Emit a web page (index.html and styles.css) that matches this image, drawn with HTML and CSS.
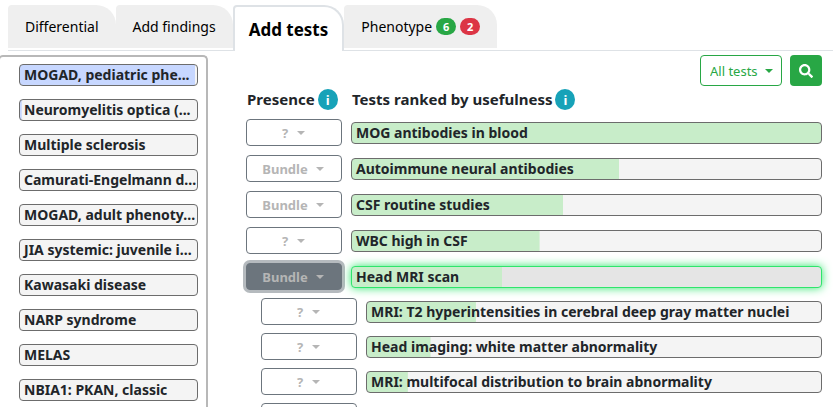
FILE: index.html
```
<!DOCTYPE html>
<html lang="en">
<head>
    <meta charset="UTF-8">
    <meta name="viewport" content="width=device-width, initial-scale=1.0">
    <title>Add tests</title>
    <link rel="stylesheet" href="styles.css">
</head>
<body>
    <nav class="tabs">
        <a class="tab" href="#differential">Differential</a>
        <a class="tab" href="#findings">Add findings</a>
        <a class="tab active" href="#tests">Add tests</a>
        <a class="tab" href="#phenotype">Phenotype <span class="badge present">6</span><span class="badge absent">2</span></a>
    </nav>

    <div class="content">
        <aside class="differential">
            <button class="bar disease" style="--fill: 99%">MOGAD, pediatric phe...</button>
            <button class="bar disease" style="--fill: 1%">Neuromyelitis optica (...</button>
            <button class="bar disease">Multiple sclerosis</button>
            <button class="bar disease">Camurati-Engelmann d...</button>
            <button class="bar disease">MOGAD, adult phenoty...</button>
            <button class="bar disease">JIA systemic: juvenile i...</button>
            <button class="bar disease">Kawasaki disease</button>
            <button class="bar disease">NARP syndrome</button>
            <button class="bar disease">MELAS</button>
            <button class="bar disease">NBIA1: PKAN, classic</button>
        </aside>

        <main class="tests">
            <div class="toolbar">
                <select class="filter" aria-label="Filter tests">
                    <option>All tests</option>
                </select>
                <button class="search" aria-label="Search">
                    <svg viewBox="0 0 512 512" width="14" height="14"><path fill="currentColor" d="M505 442.7L405.3 343c-4.5-4.5-10.6-7-17-7H372c27.6-35.3 44-79.7 44-128C416 93.1 322.9 0 208 0S0 93.1 0 208s93.1 208 208 208c48.3 0 92.7-16.4 128-44v16.3c0 6.4 2.5 12.5 7 17l99.7 99.7c9.4 9.4 24.6 9.4 33.9 0l28.3-28.3c9.4-9.4 9.4-24.6.1-34zM208 336c-70.7 0-128-57.2-128-128 0-70.7 57.2-128 128-128 70.7 0 128 57.2 128 128 0 70.7-57.2 128-128 128z"/></svg>
                </button>
            </div>

            <div class="row headings">
                <div class="heading">Presence <button class="info" aria-label="About presence">i</button></div>
                <div class="heading">Tests ranked by usefulness <button class="info" aria-label="About ranking">i</button></div>
            </div>

            <div class="list">
                <div class="row">
                    <select class="presence" aria-label="MOG antibodies in blood"><option>?</option></select>
                    <button class="bar" style="--fill: 100%">MOG antibodies in blood</button>
                </div>
                <div class="row">
                    <select class="presence bundle" aria-label="Autoimmune neural antibodies"><option>Bundle</option></select>
                    <button class="bar" style="--fill: 57%">Autoimmune neural antibodies</button>
                </div>
                <div class="row">
                    <select class="presence bundle" aria-label="CSF routine studies"><option>Bundle</option></select>
                    <button class="bar" style="--fill: 45%">CSF routine studies</button>
                </div>
                <div class="row">
                    <select class="presence" aria-label="WBC high in CSF"><option>?</option></select>
                    <button class="bar" style="--fill: 40%">WBC high in CSF</button>
                </div>
                <div class="row">
                    <select class="presence bundle open" aria-label="Head MRI scan"><option>Bundle</option></select>
                    <button class="bar current" style="--fill: 32%">Head MRI scan</button>
                </div>
            </div>

            <div class="list nested">
                <div class="row">
                    <select class="presence" aria-label="MRI: T2 hyperintensities"><option>?</option></select>
                    <button class="bar" style="--fill: 24%">MRI: T2 hyperintensities in cerebral deep gray matter nuclei</button>
                </div>
                <div class="row">
                    <select class="presence" aria-label="Head imaging: white matter abnormality"><option>?</option></select>
                    <button class="bar" style="--fill: 14%">Head imaging: white matter abnormality</button>
                </div>
                <div class="row">
                    <select class="presence" aria-label="MRI: multifocal distribution"><option>?</option></select>
                    <button class="bar" style="--fill: 9%">MRI: multifocal distribution to brain abnormality</button>
                </div>
                <div class="row">
                    <select class="presence" aria-label="Next test"><option>?</option></select>
                </div>
            </div>
        </main>
    </div>
</body>
</html>
```
FILE: styles.css
```
* {
    box-sizing: border-box;
}

body {
    margin: 0;
    height: 100vh;
    overflow: hidden;
    display: flex;
    flex-direction: column;
    font-family: "Noto Sans", "Open Sans", sans-serif;
    font-size: 14px;
    color: #212529;
    background: #fff;
}

button,
select {
    font: inherit;
    margin: 0;
    cursor: pointer;
}

.tabs {
    display: flex;
    flex: none;
    height: 46px;
    margin: 5px 0 0 8px;
    border-bottom: 1px solid #dee2e6;
}

.tab {
    display: flex;
    align-items: center;
    height: 43px;
    padding: 0 17px;
    border-radius: 4px 20px 0 0;
    background: #efefef;
    color: #000;
    text-decoration: none;
    white-space: nowrap;
}

.tab.active {
    height: 46px;
    padding: 0 14px;
    border: 2px solid #dee2e6;
    border-bottom: 0;
    background: #fff;
    font-size: 17px;
    font-weight: 700;
}

.badge {
    width: 20px;
    margin-left: 4px;
    border-radius: 10px;
    color: #fff;
    font-size: 11px;
    font-weight: 700;
    line-height: 17px;
    text-align: center;
}

.present {
    background: #28a745;
}

.absent {
    background: #dc3545;
}

.content {
    display: flex;
    flex: 1;
    min-height: 0;
    padding: 4px 11px 0 0;
    overflow: hidden;
}

.differential {
    display: flex;
    flex: none;
    flex-direction: column;
    gap: 13px;
    width: 210px;
    margin-left: -2px;
    padding: 7px 8px 0 19px;
    border: 2px solid #b8b8b8;
    border-bottom: 0;
    border-radius: 5px 5px 0 0;
}

.bar {
    --fill: 0%;
    --color: #c8edc9;
    --track: #f4f4f4;
    flex: none;
    height: 22px;
    padding: 0 4px;
    border: 1px solid #6c6c6c;
    border-radius: 4px;
    background: linear-gradient(var(--color), var(--color)) 0 0 / var(--fill) 100% no-repeat var(--track);
    color: #212529;
    font-weight: 700;
    line-height: 20px;
    text-align: left;
    white-space: nowrap;
    overflow: hidden;
}

.disease {
    --color: #c7d7ff;
}

.current {
    --track: #e5e5e5;
    border-color: #2fe56c;
    box-shadow: 0 0 10px #2fe56c;
}

.tests {
    flex: 1;
    min-width: 0;
    padding-left: 38px;
}

.toolbar {
    display: flex;
    justify-content: flex-end;
    gap: 8px;
}

.filter,
.presence {
    appearance: none;
    border: 1px solid #6c757d;
    border-radius: 4px;
    background: #fff url("data:image/svg+xml,%3Csvg xmlns='http://www.w3.org/2000/svg' width='8' height='4'%3E%3Cpath d='M0 0h8L4 4z' fill='%23b5b5b5'/%3E%3C/svg%3E") no-repeat 50px 11px;
    font-size: 13px;
}

.filter {
    width: 82px;
    height: 31px;
    padding: 0 9px;
    border-color: #28a745;
    background-image: url("data:image/svg+xml,%3Csvg xmlns='http://www.w3.org/2000/svg' width='8' height='4'%3E%3Cpath d='M0 0h8L4 4z' fill='%2328a745'/%3E%3C/svg%3E");
    background-position: 64px 13px;
    color: #28a745;
}

.search {
    display: flex;
    align-items: center;
    justify-content: center;
    width: 32px;
    height: 31px;
    padding: 0;
    border: 0;
    border-radius: 4px;
    background: #28a745;
    color: #fff;
}

.row {
    display: grid;
    grid-template-columns: 96px 1fr;
    align-items: center;
    column-gap: 9px;
}

.headings {
    margin: 3px 0 9px;
    font-size: 15px;
    font-weight: 700;
}

.heading {
    display: flex;
    align-items: center;
    gap: 3px;
    padding-left: 1px;
    line-height: 19px;
    white-space: nowrap;
}

.info {
    width: 20px;
    height: 21px;
    padding: 0;
    border: 0;
    border-radius: 50%;
    background: #17a2b8;
    color: #fff;
    font-size: 13px;
    line-height: 20px;
}

.list {
    display: grid;
    gap: 9px;
}

.nested {
    gap: 8px;
    margin: 8px 0 0 15px;
}

.presence {
    width: 96px;
    height: 27px;
    padding: 0 18px 0 0;
    color: #b5b5b5;
    font-weight: 700;
    text-align: center;
    text-align-last: center;
}

.bundle {
    background-position: 69px 11px;
}

.open {
    border-color: #6c757d;
    background-color: #6c757d;
    box-shadow: 0 0 0 3px #b5babe;
}
```
